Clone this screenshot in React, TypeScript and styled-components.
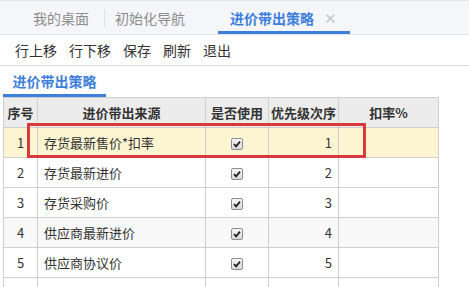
import styled, { createGlobalStyle } from "styled-components";

const GlobalStyle = createGlobalStyle`
  body {
    margin: 0;
    background: #ffffff;
    font-family: "Microsoft YaHei", "Noto Sans CJK SC", "Liberation Sans", sans-serif;
    color: #333;
  }
`;

const Page = styled.div`
  width: 469px;
  height: 287px;
  overflow: hidden;
`;

const TabBar = styled.div`
  height: 33px;
  display: flex;
  align-items: stretch;
  padding-left: 18px;
  background: #f4f6f9;
  border-top: 1px solid #e4e6ea;
  border-bottom: 1px solid #e1e4e8;
`;

const Tab = styled.div<{ active?: boolean; pad: string }>`
  display: flex;
  align-items: center;
  padding: ${(p) => p.pad};
  font-size: 14px;
  color: ${(p) => (p.active ? "#3f7fdc" : "#8d8d8d")};
  font-weight: ${(p) => (p.active ? "bold" : "normal")};
  box-shadow: ${(p) => (p.active ? "inset 0 -3px 0 #3f7fdc" : "none")};
`;

const TabDivider = styled.span`
  width: 1px;
  height: 18px;
  align-self: center;
  background: #dde0e4;
`;

const Close = styled.span`
  margin-left: 10px;
  font-size: 15px;
  font-weight: normal;
  color: #c4c8ce;
`;

const Toolbar = styled.div`
  height: 30px;
  display: flex;
  align-items: center;
  gap: 12px;
  padding-left: 15px;
  border-bottom: 1px solid #dcdcdc;
`;

const ToolButton = styled.span`
  font-size: 14px;
  color: #333;
`;

const SubTabs = styled.div`
  height: 31px;
  padding-left: 3px;
  display: flex;
`;

const SubTab = styled.div`
  width: 103px;
  display: flex;
  justify-content: center;
  align-items: center;
  padding-bottom: 2px;
  font-size: 14px;
  font-weight: bold;
  color: #3f7fdc;
  box-shadow: inset 0 -3px 0 #3f7fdc;
`;

const GridWrap = styled.div`
  position: relative;
  margin-left: 3px;
  width: 435px;
`;

const Grid = styled.table`
  border-collapse: collapse;
  table-layout: fixed;
  width: 435px;
  font-size: 13px;
`;

const Th = styled.th`
  height: 29px;
  padding: 0;
  background: #ececec;
  border: 1px solid #cfcfcf;
  font-weight: bold;
  color: #333;
  text-align: center;
  white-space: nowrap;
  overflow: hidden;
`;

const Row = styled.tr<{ tone: "hl" | "alt" | "plain" }>`
  background: ${(p) =>
    p.tone === "hl" ? "#fdf4d2" : p.tone === "alt" ? "#f8f8f8" : "#ffffff"};
`;

const Td = styled.td<{ align?: string }>`
  height: 29px;
  padding: 0 6px;
  border: 1px solid #cfcfcf;
  text-align: ${(p) => p.align || "left"};
  color: #333;
  white-space: nowrap;
  overflow: hidden;
`;

const Check = styled.span`
  display: inline-flex;
  align-items: center;
  justify-content: center;
  width: 10px;
  height: 10px;
  vertical-align: middle;
  border: 1px solid #8e8e8e;
  border-radius: 2px;
  background: linear-gradient(#f7f7f7, #d9d9d9);
`;

const Highlight = styled.div`
  position: absolute;
  left: 24px;
  top: 26px;
  width: 339px;
  height: 35px;
  box-sizing: border-box;
  border: 3px solid #d8393c;
  pointer-events: none;
`;

const columns = [34, 168, 63, 70, 100];

const rows = [
  { no: 1, name: "存货最新售价*扣率", order: "1" },
  { no: 2, name: "存货最新进价", order: "2" },
  { no: 3, name: "存货采购价", order: "3" },
  { no: 4, name: "供应商最新进价", order: "4" },
  { no: 5, name: "供应商协议价", order: "5" },
];

const CheckMark = () => (
  <Check>
    <svg width="8" height="8" viewBox="0 0 8 8">
      <path d="M1 4.2 L3.1 6.3 L7 1.6" stroke="#222" strokeWidth="1.8" fill="none" />
    </svg>
  </Check>
);

const App = () => {
  return (
    <Page>
      <GlobalStyle />
      <TabBar>
        <Tab pad="0 15px">我的桌面</Tab>
        <TabDivider />
        <Tab pad="0 33px 0 10px">初始化导航</Tab>
        <Tab active pad="0 13px 0 12px">
          进价带出策略<Close>✕</Close>
        </Tab>
      </TabBar>
      <Toolbar>
        <ToolButton>行上移</ToolButton>
        <ToolButton>行下移</ToolButton>
        <ToolButton>保存</ToolButton>
        <ToolButton>刷新</ToolButton>
        <ToolButton>退出</ToolButton>
      </Toolbar>
      <SubTabs>
        <SubTab>进价带出策略</SubTab>
      </SubTabs>
      <GridWrap>
        <Grid>
          <colgroup>
            {columns.map((w, i) => (
              <col key={i} style={{ width: w }} />
            ))}
          </colgroup>
          <thead>
            <tr>
              <Th>序号</Th>
              <Th>进价带出来源</Th>
              <Th>是否使用</Th>
              <Th>优先级次序</Th>
              <Th>扣率%</Th>
            </tr>
          </thead>
          <tbody>
            {rows.map((r) => (
              <Row key={r.no} tone={r.no === 1 ? "hl" : r.no === 4 ? "alt" : "plain"}>
                <Td align="center">{r.no}</Td>
                <Td>{r.name}</Td>
                <Td align="center">
                  <CheckMark />
                </Td>
                <Td align="right">{r.order}</Td>
                <Td />
              </Row>
            ))}
            <Row tone="plain">
              <Td />
              <Td />
              <Td />
              <Td />
              <Td />
            </Row>
          </tbody>
        </Grid>
        <Highlight />
      </GridWrap>
    </Page>
  );
};

export default App;
